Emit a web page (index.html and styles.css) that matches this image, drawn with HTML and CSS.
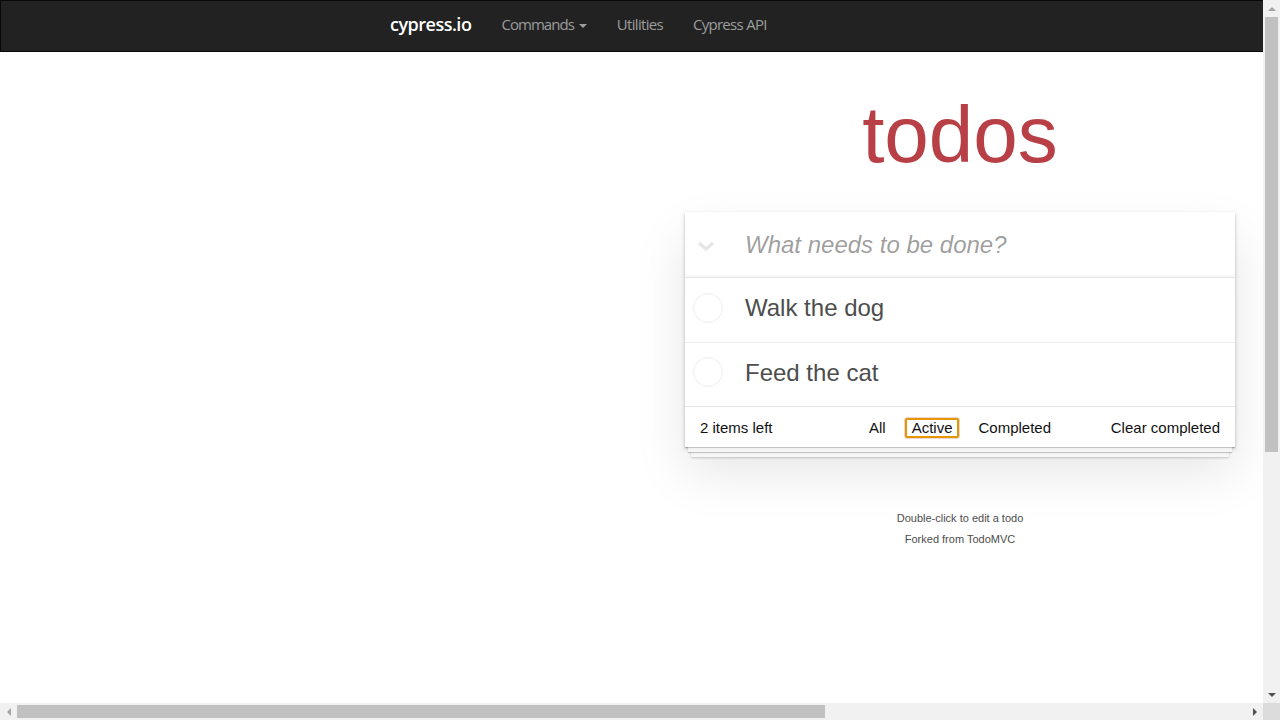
FILE: index.html
```html
<!DOCTYPE html>
<html lang="en">
<head>
<meta charset="utf-8">
<title>cypress.io todos</title>
<link rel="stylesheet" href="styles.css">
</head>
<body>
<nav class="navbar">
  <div class="container">
    <a class="brand" href="#">cypress.io</a>
    <ul class="nav">
      <li><a href="#" class="cmd">Commands <span class="caret"></span></a></li>
      <li><a href="#">Utilities</a></li>
      <li><a href="#">Cypress API</a></li>
    </ul>
  </div>
</nav>
<div class="page">
  <section class="todoapp">
    <h1>todos</h1>
    <div class="card">
      <header class="header">
        <span class="toggle-all">
          <svg width="18" height="10" viewBox="0 0 18 10"><polyline points="2,2 9,8 16,2" fill="none" stroke="#e6e6e6" stroke-width="3.4" stroke-linejoin="miter"/></svg>
        </span>
        <input class="new-todo" placeholder="What needs to be done?">
      </header>
      <ul class="todo-list">
        <li><span class="toggle"></span><label>Walk the dog</label></li>
        <li><span class="toggle"></span><label>Feed the cat</label></li>
      </ul>
      <footer class="footer">
        <span class="todo-count">2 items left</span>
        <ul class="filters">
          <li><a href="#">All</a></li>
          <li><a href="#" class="selected">Active</a></li>
          <li><a href="#">Completed</a></li>
        </ul>
        <span class="clear-completed">Clear completed</span>
      </footer>
    </div>
  </section>
  <footer class="info">
    <p>Double-click to edit a todo</p>
    <p>Forked from TodoMVC</p>
  </footer>
</div>

<div class="vscroll">
  <span class="sb-btn"><span class="tri tri-up"></span></span>
  <span class="sb-thumb-v"></span>
  <span class="sb-fill"></span>
  <span class="sb-btn"><span class="tri tri-down"></span></span>
</div>
<div class="hscroll">
  <span class="sb-btn"><span class="tri tri-left"></span></span>
  <span class="sb-thumb-h"></span>
  <span class="sb-fill"></span>
  <span class="sb-btn"><span class="tri tri-right"></span></span>
</div>
<div class="sb-corner"></div>
</body>
</html>
```

FILE: styles.css
```css
html {
  overflow: hidden;
}
html, body {
  margin: 0;
  padding: 0;
  background: #fff;
}
body {
  width: 1920px;
  height: 1080px;
  font-family: "Liberation Sans", Arial, sans-serif;
  color: #111;
}
a { text-decoration: none; color: inherit; }

/* navbar */
.navbar {
  height: 50px;
  background: #222;
  border: 1px solid #080808;
  font-family: "Open Sans", sans-serif;
}
.container {
  width: 1170px;
  margin: 0 auto;
  padding: 0 15px;
  box-sizing: border-box;
  display: flex;
}
.brand {
  display: block;
  margin-left: -15px;
  padding: 13px 15px 17px;
  font-size: 18px;
  line-height: 20px;
  font-weight: 600;
  color: #fff;
  letter-spacing: -0.5px;
}
.nav {
  display: flex;
  margin: 0;
  padding: 0;
  list-style: none;
}
.nav a {
  display: block;
  padding: 13px 15px 17px;
  font-size: 15px;
  line-height: 20px;
  color: #9d9d9d;
  letter-spacing: -0.7px;
}
.nav a.cmd {
  letter-spacing: -0.95px;
}
.caret {
  display: inline-block;
  width: 0;
  height: 0;
  margin-left: 2px;
  vertical-align: middle;
  border-top: 4px solid #9d9d9d;
  border-left: 4px solid transparent;
  border-right: 4px solid transparent;
}

/* todo app */
.todoapp {
  width: 550px;
  margin: 0 auto;
}
.todoapp h1 {
  margin: 43px 0 37px;
  height: 80px;
  font-size: 80px;
  line-height: 80px;
  font-weight: 400;
  text-align: center;
  color: #b83f45;
}
.card {
  background: #fff;
  box-shadow:
    0 1px 1px rgba(0, 0, 0, 0.2),
    0 8px 0 -3px #f6f6f6,
    0 9px 1px -3px rgba(0, 0, 0, 0.2),
    0 16px 0 -6px #f6f6f6,
    0 17px 2px -6px rgba(0, 0, 0, 0.2),
    0 2px 4px 0 rgba(0, 0, 0, 0.2),
    0 25px 50px 0 rgba(0, 0, 0, 0.1);
}
.header {
  display: flex;
  align-items: center;
  height: 65px;
  box-shadow: inset 0 -2px 1px rgba(0, 0, 0, 0.03);
}
.toggle-all {
  width: 42px;
  display: flex;
  justify-content: center;
  align-items: center;
  padding-top: 2px;
}
.toggle-all svg { display: block; }
.new-todo {
  flex: 1;
  height: 65px;
  box-sizing: border-box;
  padding: 16px 16px 16px 18px;
  border: none;
  outline: none;
  background: transparent;
  font-family: inherit;
  font-size: 24px;
  color: #4d4d4d;
}
.new-todo::placeholder {
  font-style: italic;
  color: rgba(0, 0, 0, 0.4);
}
.todo-list {
  margin: 0;
  padding: 0;
  list-style: none;
  border-top: 1px solid #e6e6e6;
}
.todo-list li {
  display: flex;
  align-items: center;
  border-bottom: 1px solid #ededed;
  font-size: 24px;
}
.todo-list li:last-child { border-bottom: none; }
.toggle {
  width: 30px;
  height: 30px;
  box-sizing: border-box;
  margin: -4px 0 0 8px;
  border: 1px solid #ededed;
  border-radius: 50%;
  flex: none;
}
.todo-list label {
  padding: 13px 15px 17px 22px;
  line-height: 33.6px;
  color: #4d4d4d;
}
.footer {
  display: grid;
  grid-template-columns: 1fr auto 1fr;
  align-items: center;
  height: 20px;
  padding: 10px 15px;
  font-size: 15px;
  line-height: 20px;
  border-top: 1px solid #e6e6e6;
  color: #111;
}
.todo-count { justify-self: start; }
.clear-completed { justify-self: end; }
.filters {
  margin: 0;
  padding: 0;
  list-style: none;
  display: flex;
  gap: 4px;
}
.filters a {
  display: block;
  margin: 0 3px;
  padding: 0 7px;
  line-height: 20px;
  border: 1px solid transparent;
  border-radius: 3px;
}
.filters a.selected {
  border-color: rgba(175, 47, 47, 0.2);
  box-shadow: inset 0 0 0 2px #e59700;
}
.info {
  margin: 66px auto 0;
  font-size: 11px;
  color: #4d4d4d;
  text-align: center;
  width: 550px;
}
.info p {
  margin: 10px 0;
  line-height: 1;
}
.info p:first-child { margin-top: 0; }

/* window scrollbars (drawn over the page) */
.vscroll {
  position: fixed;
  top: 0;
  right: 0;
  width: 17px;
  height: 703px;
  background: #f1f1f1;
  display: flex;
  flex-direction: column;
}
.hscroll {
  position: fixed;
  left: 0;
  bottom: 0;
  width: 1263px;
  height: 17px;
  background: #f1f1f1;
  display: flex;
}
.sb-corner {
  position: fixed;
  right: 0;
  bottom: 0;
  width: 17px;
  height: 17px;
  background: #dcdcdc;
}
.sb-btn {
  width: 17px;
  height: 17px;
  flex: none;
  display: flex;
  align-items: center;
  justify-content: center;
}
.sb-fill { flex: 1; }
.sb-thumb-v {
  flex: none;
  height: 435px;
  margin: 0 2px;
  background: #c1c1c1;
}
.sb-thumb-h {
  flex: none;
  width: 808px;
  margin: 2px 0;
  background: #c1c1c1;
}
.tri {
  width: 0;
  height: 0;
  display: block;
}
.tri-up {
  border-bottom: 4px solid #a3a3a3;
  border-left: 4px solid transparent;
  border-right: 4px solid transparent;
}
.tri-down {
  border-top: 4px solid #505050;
  border-left: 4px solid transparent;
  border-right: 4px solid transparent;
}
.tri-left {
  border-right: 4px solid #a3a3a3;
  border-top: 4px solid transparent;
  border-bottom: 4px solid transparent;
}
.tri-right {
  border-left: 4px solid #505050;
  border-top: 4px solid transparent;
  border-bottom: 4px solid transparent;
}
```
